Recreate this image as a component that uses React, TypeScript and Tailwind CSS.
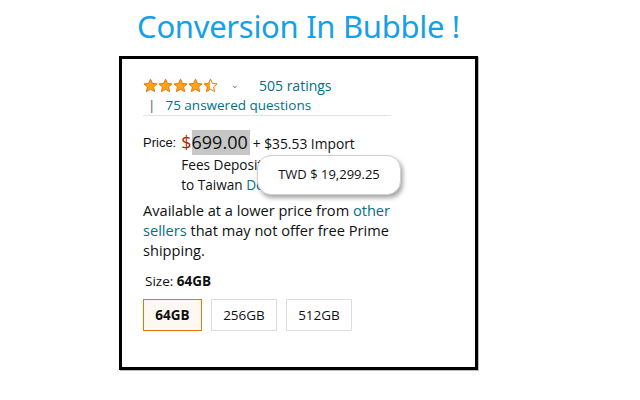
import React from "react";

const Star = ({ half = false, id }: { half?: boolean; id: string }) => (
  <svg width="15" height="15" viewBox="0 0 24 24">
    <defs>
      <linearGradient id={id}>
        <stop offset="50%" stopColor="#FFA41C" />
        <stop offset="50%" stopColor="#ffffff" />
      </linearGradient>
    </defs>
    <path
      d="M12 1.8l3.1 6.9 7.4.7-5.6 5 1.7 7.4L12 17.9l-6.6 3.9 1.7-7.4-5.6-5 7.4-.7z"
      fill={half ? `url(#${id})` : "#FFA41C"}
      stroke="#E47911"
      strokeWidth="1.6"
      strokeLinejoin="round"
    />
  </svg>
);

export default function App() {
  const seg = { fontFamily: "'Open Sans', 'Noto Sans', sans-serif" };
  return (
    <div className="w-[640px] h-[400px] bg-white flex flex-col items-start pl-[119px]" style={seg}>
      <div className="w-[359px] h-[56px] flex items-center justify-center">
        <h1 className="text-[31px] leading-none text-[#16a0e6] mb-[4px] tracking-[-0.3px]" style={{ fontFamily: "'Noto Sans', sans-serif" }}>
          Conversion In Bubble !
        </h1>
      </div>
      <div className="w-[359px] h-[314px] border-[3px] border-black shadow-[1px_1px_0_#bbb] pl-[21px] pt-[15px] relative">
        <div className="flex items-center h-[22px]">
          <div className="flex gap-0">
            <Star id="s1" />
            <Star id="s2" />
            <Star id="s3" />
            <Star id="s4" />
            <Star id="s5" half />
          </div>
          <span className="ml-[13px] text-[9px] text-gray-500">⌄</span>
          <span className="ml-[20px] text-[14px] text-[#007185]">505 ratings</span>
        </div>
        <div className="flex items-center h-[18px] text-[13.5px] text-[#007185] ml-[5px]">
          <span className="text-[#555555]">|</span>
          <span className="ml-[10px]">75 answered questions</span>
        </div>
        <div className="w-[248px] h-px bg-[#e3e3e3] mt-[1px]" />
        <div className="mt-[14px] flex text-[13px] text-[#0f1111]">
          <span className="pt-[3px]" style={{ fontFamily: "'Liberation Sans', Arial, sans-serif" }}>Price:</span>
          <div className="ml-[5px] w-[205px]">
            <div className="flex items-end h-[25px]">
              <span className="text-[18px] leading-[25px] text-[#B12704]">$</span>
              <span className="text-[18px] leading-[25px] bg-[#c6c6c6] pr-[2px]">699.00</span>
              <span className="ml-[3px] text-[13.8px] leading-[22px]">+ $35.53 Import</span>
            </div>
            <div className="leading-[20px] text-[13.6px]">
              Fees Deposit
              <br />
              to Taiwan <span className="text-[#007185]">Details</span>
            </div>
          </div>
        </div>
        <div className="absolute left-[135px] top-[96px] w-[144px] h-[40px] bg-white rounded-[14px] border border-[#cfcfcf] shadow-[2px_3px_4px_rgba(0,0,0,0.35)] flex items-center justify-center text-[13px] text-[#111]">
          TWD $ 19,299.25
        </div>
        <div className="mt-[5px] w-[262px] text-[14.6px] leading-[20px] text-[#0f1111]">
          Available at a lower price from <span className="text-[#007185]">other</span>{" "}
          <span className="text-[#007185]">sellers</span> that may not offer free Prime shipping.
        </div>
        <div className="mt-[11px] text-[13.5px] text-[#0f1111] leading-[20px] ml-[2px]">
          Size: <span className="font-bold">64GB</span>
        </div>
        <div className="mt-[8px] flex gap-[9px]">
          <div className="w-[59px] h-[32px] border border-[#E77600] bg-[#FEF8F2] flex items-center justify-center text-[13.5px] font-bold text-[#0f1111]">
            64GB
          </div>
          <div className="w-[66px] h-[32px] border border-[#dddddd] flex items-center justify-center text-[13.5px] text-[#0f1111]">
            256GB
          </div>
          <div className="w-[66px] h-[32px] border border-[#dddddd] flex items-center justify-center text-[13.5px] text-[#0f1111]">
            512GB
          </div>
        </div>
      </div>
    </div>
  );
}
